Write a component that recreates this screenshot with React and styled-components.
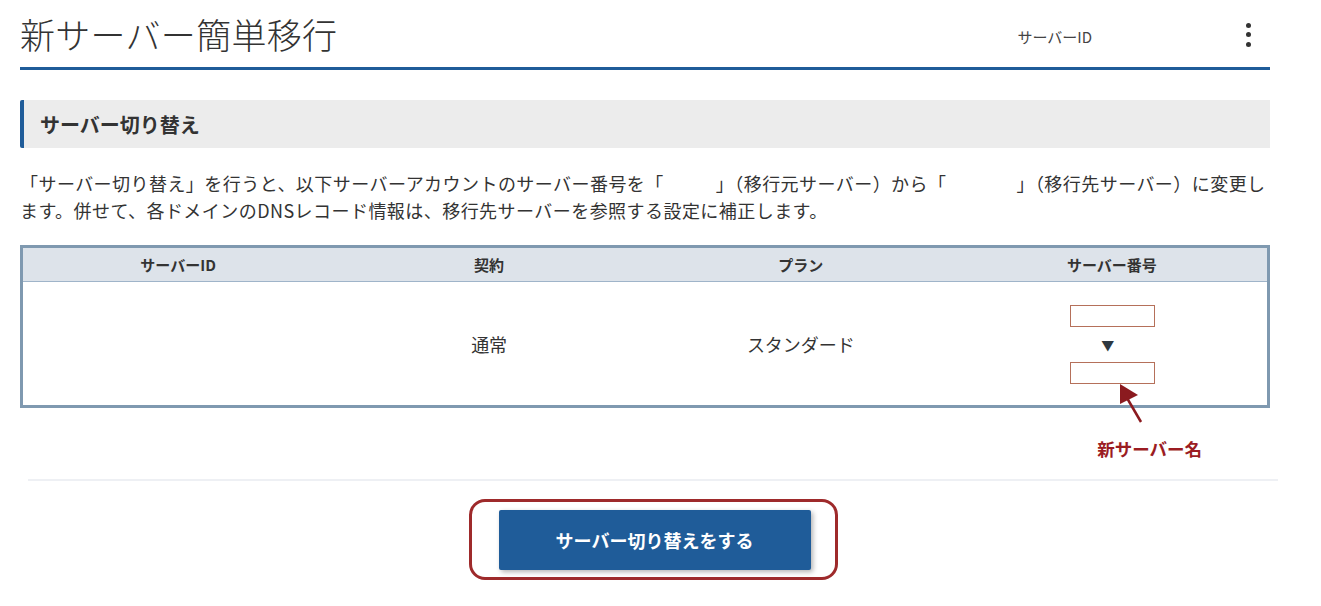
import React from "react";
import styled, { createGlobalStyle } from "styled-components";

const Global = createGlobalStyle`
  html, body { margin: 0; padding: 0; background: #fff; }
  body {
    font-family: "Noto Sans CJK JP", "Noto Sans", sans-serif;
    color: #333;
  }
`;

const Page = styled.div`
  width: 1250px;
  padding: 0 51px 0 20px;
`;

const Header = styled.header`
  height: 67px;
  display: flex;
  align-items: center;
  justify-content: space-between;
  border-bottom: 3px solid #1f5c99;
`;

const Title = styled.h1`
  margin: 0;
  font-size: 35px;
  font-weight: 300;
  color: #333;
  letter-spacing: 0.3px;
  line-height: 1;
`;

const HeaderRight = styled.div`
  display: flex;
  align-items: center;
  padding-top: 2px;
`;

const ServerIdLabel = styled.span`
  font-size: 15px;
  color: #444;
  margin-right: 149px;
  padding-top: 3px;
`;

const Kebab = styled.button`
  width: 14px;
  height: 24px;
  border: 0;
  background: transparent;
  padding: 0;
  margin-right: 15px;
  display: flex;
  flex-direction: column;
  align-items: center;
  justify-content: space-between;
  span {
    width: 5px;
    height: 5px;
    border-radius: 50%;
    background: #333;
  }
`;

const SectionHead = styled.h2`
  margin: 30px 0 0;
  height: 48px;
  display: flex;
  align-items: center;
  background: #ececec;
  border-left: 4px solid #1f5c99;
  border-radius: 2px 0 0 2px;
  padding-left: 16px;
  font-size: 20px;
  font-weight: 700;
  color: #333;
`;

const Lead = styled.p`
  margin: 22px 0 0;
  font-size: 18px;
  line-height: 27px;
  color: #333;
  letter-spacing: 0.45px;
`;

const Blank = styled.span`
  display: inline-block;
  width: ${(p) => p.$w}px;
`;

const TableWrap = styled.div`
  position: relative;
  margin-top: 21px;
`;

const Table = styled.table`
  width: 100%;
  border-collapse: collapse;
  border: 3px solid #7f99b0;
  table-layout: fixed;
`;

const Th = styled.th`
  background: #dde3ea;
  height: 33px;
  padding: 0;
  font-size: 15px;
  font-weight: 700;
  color: #333;
  border-bottom: 1px solid #9fb4c9;
  text-align: center;
`;

const Td = styled.td`
  height: 123px;
  padding: 0;
  font-size: 18px;
  color: #333;
  text-align: center;
  vertical-align: middle;
`;

const NumberStack = styled.div`
  display: flex;
  flex-direction: column;
  align-items: center;
  gap: 8px;
  padding-left: 2px;
  padding-top: 2px;
`;

const NumberBox = styled.div`
  width: 83px;
  height: 20px;
  border: 1px solid #b5705a;
  background: #fff;
`;

const Down = styled.span`
  font-size: 13px;
  line-height: 19px;
  color: #2f3840;
  padding-right: 10px;
`;

const Pointer = styled.svg`
  position: absolute;
  left: 1077px;
  top: 139px;
  overflow: visible;
`;

const NoteRow = styled.div`
  display: flex;
  justify-content: flex-end;
  padding: 29px 68px 0 0;
  height: 42px;
`;

const Note = styled.span`
  font-size: 17.5px;
  font-weight: 700;
  color: #9b1c22;
  line-height: 24px;
`;

const Footer = styled.div`
  margin-left: 28px;
  width: 1250px;
  border-top: 2px solid #eef0f4;
  display: flex;
  justify-content: center;
  padding-top: 18px;
`;

const Highlight = styled.div`
  display: inline-flex;
  border: 3px solid #9e2a2b;
  border-radius: 16px;
  padding: 8px 24px 7px 27px;
`;

const PrimaryButton = styled.button`
  width: 312px;
  height: 60px;
  border: 0;
  border-radius: 2px;
  background: #1f5c99;
  color: #fff;
  font-family: inherit;
  font-size: 18px;
  font-weight: 700;
  box-shadow: 2px 2px 5px rgba(0, 0, 0, 0.3);
  cursor: pointer;
`;

export default function App() {
  return (
    <>
      <Global />
      <Page>
        <Header>
          <Title>新サーバー簡単移行</Title>
          <HeaderRight>
            <ServerIdLabel>サーバーID</ServerIdLabel>
            <Kebab aria-label="メニュー">
              <span />
              <span />
              <span />
            </Kebab>
          </HeaderRight>
        </Header>

        <SectionHead>サーバー切り替え</SectionHead>
        <Lead>
          「サーバー切り替え」を行うと、以下サーバーアカウントのサーバー番号を「<Blank $w={52} />」（移行元サーバー）から「<Blank $w={70} />」（移行先サーバー）に変更します。併せて、各ドメインのDNSレコード情報は、移行先サーバーを参照する設定に補正します。
        </Lead>

        <TableWrap>
          <Table>
            <thead>
              <tr>
                <Th>サーバーID</Th>
                <Th>契約</Th>
                <Th>プラン</Th>
                <Th>サーバー番号</Th>
              </tr>
            </thead>
            <tbody>
              <tr>
                <Td></Td>
                <Td>通常</Td>
                <Td>スタンダード</Td>
                <Td>
                  <NumberStack>
                    <NumberBox />
                    <Down>▼</Down>
                    <NumberBox />
                  </NumberStack>
                </Td>
              </tr>
            </tbody>
          </Table>
          <Pointer width="50" height="50" viewBox="0 0 50 50">
            <line x1="44" y1="38" x2="30" y2="14" stroke="#8b1a1f" strokeWidth="2.5" />
            <polygon points="23,0 41,11 23,20" fill="#8b1a1f" />
          </Pointer>
        </TableWrap>

        <NoteRow>
          <Note>新サーバー名</Note>
        </NoteRow>
      </Page>
      <Footer>
        <Highlight>
          <PrimaryButton>サーバー切り替えをする</PrimaryButton>
        </Highlight>
      </Footer>
    </>
  );
}
